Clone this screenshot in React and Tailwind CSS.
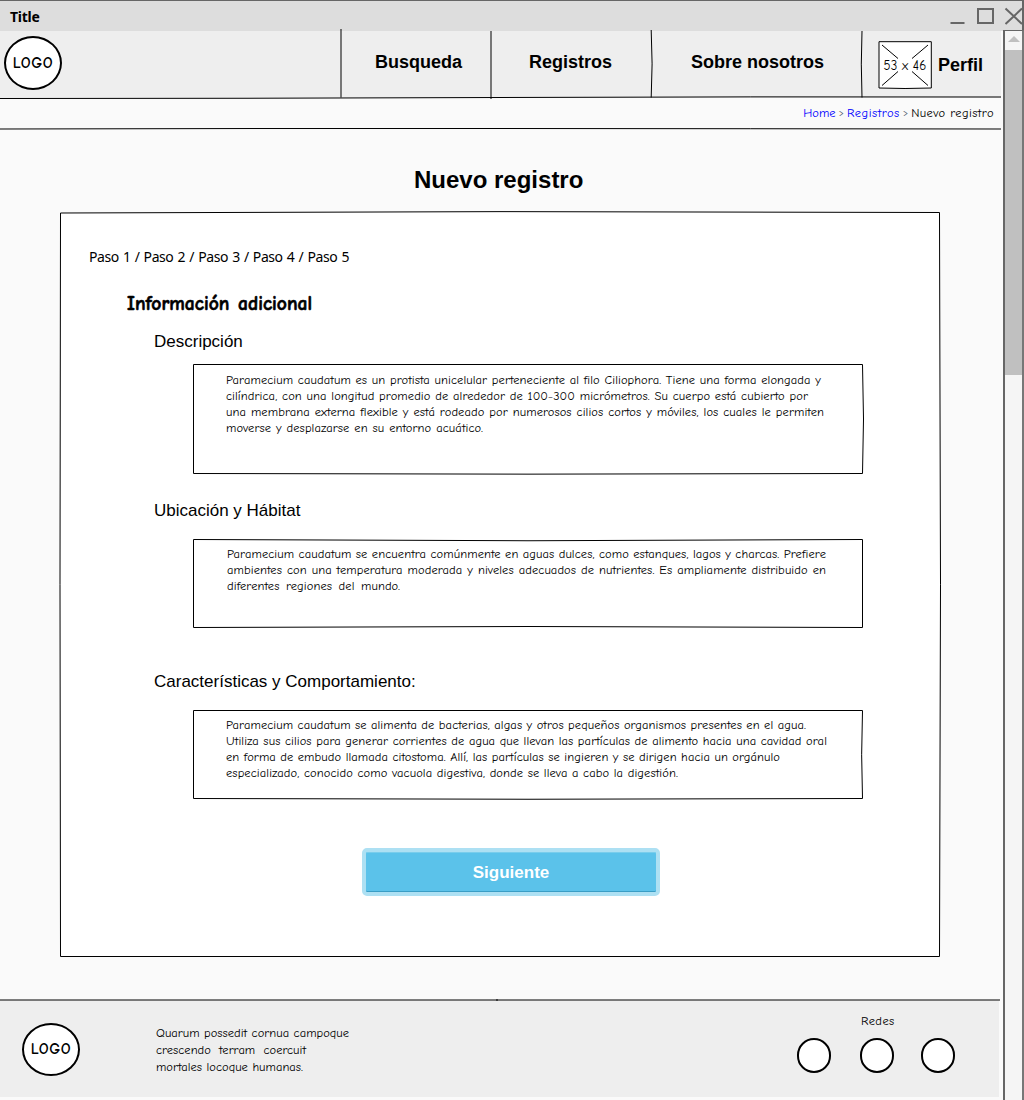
const COMIC = 'font-["Comic_Neue","Comic_Sans_MS",Lato,sans-serif]';

const sections = [
  {
    title: "Descripción",
    titleClass: "mt-[15px]",
    box: "mt-[11px] h-[110px] pt-[8px] pl-[33px]",
    height: 110,
    path: "M.5 .5H669.5Q671.5 55 669.5 109.5Q335 110.8 .5 109.5Z",
    lines: [
      ["Paramecium caudatum es un protista unicelular perteneciente al filo Ciliophora. Tiene una forma elongada y", "w-[595px]"],
      ["cilíndrica, con una longitud promedio de alrededor de 100-300 micrómetros. Su cuerpo está cubierto por", "w-[582px]"],
      ["una membrana externa flexible y está rodeado por numerosos cilios cortos y móviles, los cuales le permiten", "w-[598px]"],
      ["moverse y desplazarse en su entorno acuático.", "w-[257px]"],
    ],
  },
  {
    title: "Ubicación y Hábitat",
    titleClass: "mt-[26px]",
    box: "mt-[17px] h-[89px] pt-[7px] pl-[34px]",
    height: 89,
    path: "M.5 .5Q335 3 669.5 .5V88.5Q335 86.5 .5 88.5Z",
    lines: [
      ["Paramecium caudatum se encuentra comúnmente en aguas dulces, como estanques, lagos y charcas. Prefiere", "w-[599px]"],
      ["ambientes con una temperatura moderada y niveles adecuados de nutrientes. Es ampliamente distribuido en", "w-[599px]"],
      ["diferentes regiones del mundo.", "w-[173px]"],
    ],
  },
  {
    title: "Características y Comportamiento:",
    titleClass: "mt-[43px]",
    box: "mt-[17px] h-[89px] pt-[7px] pl-[33px]",
    height: 89,
    path: "M.5 .5H669.5Q667.8 45 669.5 88.5Q335 90 .5 88.5Z",
    lines: [
      ["Paramecium caudatum se alimenta de bacterias, algas y otros pequeños organismos presentes en el agua.", "w-[580px]"],
      ["Utiliza sus cilios para generar corrientes de agua que llevan las partículas de alimento hacia una cavidad oral", "w-[601px]"],
      ["en forma de embudo llamada citostoma. Allí, las partículas se ingieren y se dirigen hacia un orgánulo", "w-[554px]"],
      ["especializado, conocido como vacuola digestiva, donde se lleva a cabo la digestión.", "w-[452px]"],
    ],
  },
];

function Sketch({ w, h, d, fill = "none" }) {
  return (
    <svg className="pointer-events-none absolute top-0 left-0 overflow-visible" width={w} height={h} viewBox={`0 0 ${w} ${h}`}>
      <path d={d} fill={fill} stroke="black" strokeWidth="1" />
    </svg>
  );
}

function Logo({ size }) {
  return (
    <div className={`flex w-[58px] items-center justify-center rounded-[50%] border-2 border-black bg-white text-[15.5px] font-semibold ${size} ${COMIC}`}>
      <span className="tracking-[0.6px]">LOGO</span>
    </div>
  );
}

function TitleBar() {
  return (
    <div className="flex h-[31px] shrink-0 justify-between border-t border-[#666] bg-[#ddd] pl-[10px]">
      <div className='pt-[5px] font-["Noto_Sans",sans-serif] text-[14px] leading-[21px] font-bold tracking-[-0.25px]'>Title</div>
      <svg width="76" height="30" viewBox="948 1 76 30" fill="none" stroke="#666" strokeWidth="2">
        <path d="M950.500 23H964.500M978 9H993V23H978ZM1005.500 8.500L1022 24M1022 8.500L1005.500 24" />
        <path d="M1023 1V31" />
      </svg>
    </div>
  );
}

function Header() {
  return (
    <header className='relative flex h-[67px] w-[1001px] bg-[#eee] font-["Liberation_Sans",sans-serif] text-[18px] leading-[20px] font-bold'>
      <div className="w-[341px] pt-[5px] pl-[4px]"><Logo size="h-[54px]" /></div>
      <div className="w-[150px] pt-[21px] pl-[34px]">Busqueda</div>
      <div className="w-[160px] pt-[21px] pl-[38px]">Registros</div>
      <div className="w-[210px] pt-[21px] pl-[40px]">Sobre nosotros</div>
      <div className="flex pt-[10px] pl-[17px]">
        <div className={`relative flex h-[48px] w-[54px] items-center justify-center text-[13px] font-normal whitespace-nowrap ${COMIC}`}>
          <svg className="absolute inset-0" width="54" height="48" viewBox="0 0 54 48" fill="white" stroke="black">
            <path d="M1 .7H53.300V47Q27 48 1 47Z" />
            <path d="M4 4L20 17.500M50 4L34 17.500M4 44.500L20 30.500M50 44.500L34 30.500" />
          </svg>
          <span className="relative pt-[2px] tracking-[0.2px]">53 x 46</span>
        </div>
        <div className="pt-[14px] pl-[6px]">Perfil</div>
      </div>
      <Sketch w={1001} h={98} d="M0 67.500Q250 67.500 500 66.500T1001 66M341 -2V66.500M491 0V68M651.200 -1Q653 33 651.200 66.500M862 0Q860.600 33 862 66.500M0 98Q250 97.300 500 97.500T1001 98" />
    </header>
  );
}

function Scrollbar() {
  return (
    <div className="-mt-px flex h-[1070px] w-[21px] flex-col border-x-2 border-t border-[#666] border-r-[#777] bg-[#f5f5f5]">
      <div className="flex h-[19px] items-center justify-center pb-[4px]">
        <svg width="12" height="6" viewBox="0 0 12 6"><path d="M6 0L12 6H0Z" fill="#c0c0c0" /></svg>
      </div>
      <div className="h-[325px] bg-[#c0c0c0]" />
    </div>
  );
}

function Footer() {
  return (
    <footer className={`relative flex h-[97px] w-[999px] justify-between bg-[#eee] text-[12.5px] tracking-[0.03px] ${COMIC}`}>
      <Sketch w={1000} h={2} d="M0 0H1000M497 -1V1" />
      <div className="flex">
        <div className="pt-[23px] pl-[22px]"><Logo size="h-[53px]" /></div>
        <div className="pt-[25px] pl-[76px] leading-[17px] whitespace-nowrap [text-align-last:justify]">
          <p className="w-[193px]">Quarum possedit cornua campoque</p>
          <p className="w-[150px]">crescendo terram coercuit</p>
          <p className="w-[147px]">mortales locoque humanas.</p>
        </div>
      </div>
      <div className="w-[202px]">
        <p className="ml-[64px] w-[34px] pt-[13px] leading-[17px] tracking-[0.4px]">Redes</p>
        <div className="flex pt-[8px]">
          <div className="h-[35px] w-[34px] rounded-full border-2 border-black bg-white" />
          <div className="ml-[29px] h-[35px] w-[34px] rounded-full border-2 border-black bg-white" />
          <div className="ml-[27px] h-[35px] w-[34px] rounded-full border-2 border-black bg-white" />
        </div>
      </div>
    </footer>
  );
}

export default function App() {
  return (
    <div className="flex h-[1100px] w-[1024px] flex-col overflow-hidden bg-[#fafafa] text-black">
      <TitleBar />
      <div className="flex h-[1069px] justify-between">
        <div className="w-[1001px]">
          <Header />
          <nav className={`flex h-[31px] justify-end gap-[3px] pt-[6px] pr-[7px] text-[12.5px] leading-[18px] whitespace-nowrap ${COMIC}`}>
            <a className="text-[#00f]">Home</a><span className="text-[10px] text-gray-600">&gt;</span>
            <a className="tracking-[0.5px] text-[#00f]">Registros</a><span className="text-[10px] text-gray-600">&gt;</span>
            <span className="tracking-[0.4px]">Nuevo registro</span>
          </nav>
          <h1 className='mt-[35px] ml-[414px] font-["Liberation_Sans",sans-serif] text-[24px] leading-[32px] font-bold'>Nuevo registro</h1>
          <main className="relative mt-[16px] ml-[60px] h-[745px] w-[880px]">
            <Sketch w={880} h={745} fill="white" d="M.5 1Q440 -1.500 879.500 .5Q881.500 372 879.500 744.500H.5Q-.5 372 .5 1Z" />
            <div className="relative flex flex-col pt-[35px]">
              <p className='ml-[29px] w-[260px] font-["Noto_Sans",sans-serif] text-[14px] leading-[20px] tracking-[-0.43px] whitespace-nowrap [text-align-last:justify]'>Paso 1 / Paso 2 / Paso 3 / Paso 4 / Paso 5</p>
              <h2 className={`mt-[25px] ml-[67px] w-[185px] text-[19.5px] leading-[24px] font-black whitespace-nowrap [-webkit-text-stroke:0.6px_black] [text-align-last:justify] ${COMIC}`}>Información adicional</h2>
              {sections.map((s) => (
                <section key={s.title}>
                  <h3 className={`ml-[94px] font-["Liberation_Sans",sans-serif] text-[17px] leading-[22px] whitespace-nowrap ${s.titleClass}`}>{s.title}</h3>
                  <div className={`relative ml-[133px] w-[670px] ${s.box}`}>
                    <Sketch w={670} h={s.height} d={s.path} />
                    {s.lines.map(([text, width]) => (
                      <p key={text} className={`text-[12.5px] leading-[16px] tracking-[0.09px] whitespace-nowrap [text-align-last:justify] ${COMIC} ${width}`}>{text}</p>
                    ))}
                  </div>
                </section>
              ))}
              <button className='mt-[49px] ml-[302px] h-[48px] w-[298px] rounded-[5px] border-4 border-[#ade0f3] bg-[#5bc2ea] pt-px font-["Liberation_Sans",sans-serif] text-[17px] font-bold text-white shadow-[inset_0_1px_#79cdec,inset_0_-1px_#3a9dc5]'>Siguiente</button>
            </div>
          </main>
          <div className="h-[43px]" />
          <Footer />
        </div>
        <Scrollbar />
      </div>
    </div>
  );
}
